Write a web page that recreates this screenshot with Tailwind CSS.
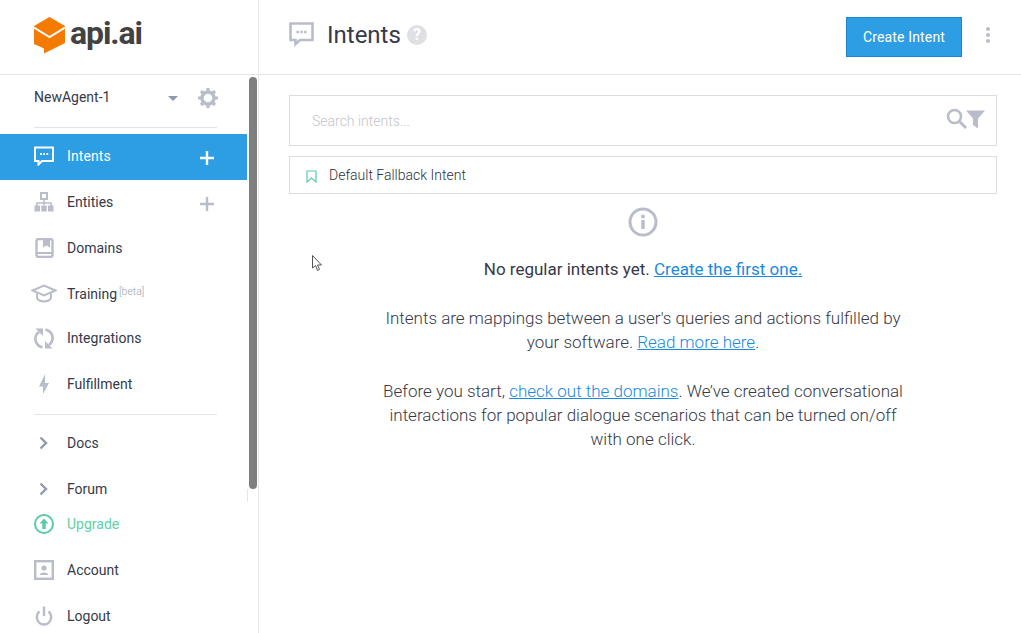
<!DOCTYPE html>
<html lang="en">
<head>
  <meta charset="UTF-8" />
  <title>Intents</title>
  <script src="https://cdn.jsdelivr.net/npm/@tailwindcss/browser@4"></script>
</head>
<body class="bg-white font-['Roboto',sans-serif] text-[#36394a] overflow-hidden">
  <div class="relative flex h-[633px] w-[1021px] overflow-hidden">

    <!-- Sidebar -->
    <aside class="relative w-[259px] shrink-0 border-r border-[#e6e6e6]">
      <div class="flex h-[75px] items-start border-b border-[#e4e4e4] pl-[34px] pt-[17px]">
        <svg width="31" height="37" viewBox="0 0 31 37" class="shrink-0">
          <path d="M15.500 0L31 9V26L10 36.500V31.500L0 27V9Z" fill="#f47a00"/>
          <path d="M0 10.500L15.500 20L31 10.500" fill="none" stroke="#fff" stroke-width="2"/>
        </svg>
        <span class="ml-[5px] mt-[-3px] text-[32px] leading-[38px] font-bold tracking-[-1.1px] text-[#424242]">api.ai</span>
      </div>

      <div class="flex h-[45px] items-center pl-[34px]">
        <span class="text-[14px]">NewAgent-1</span>
        <span class="ml-[58px] mt-[2px] h-0 w-0 border-x-[5px] border-t-[5px] border-x-transparent border-t-[#9299ab]"></span>
        <svg width="20" height="20" viewBox="0 0 20 20" class="ml-[20px]">
          <circle cx="10" cy="10" r="6" fill="none" stroke="#b9bdc9" stroke-width="3.400"/>
          <path d="M10 0v4M10 16v4M0 10h4M16 10h4M3 3l2.800 2.800M14.200 14.200L17 17M17 3l-2.800 2.800M5.800 14.200L3 17" stroke="#b9bdc9" stroke-width="3.200"/>
        </svg>
      </div>

      <div class="ml-[34px] mt-[7px] h-px w-[183px] bg-[#e4e4e4]"></div>

      <nav class="mt-[6px] w-[247px] text-[14px]">
        <div class="flex h-[46px] items-center bg-[#2d9de4] pb-[2px] pl-[34px] text-white">
          <svg width="20" height="20" viewBox="0 0 20 20" class="shrink-0">
            <path d="M1 1.500H19V15H8L4.500 18.500V15H1Z" fill="none" stroke="#fff" stroke-width="2"/>
            <path d="M6 8h1.800M9.200 8H11M12.400 8h1.800" stroke="#fff" stroke-width="2"/>
          </svg>
          <span class="ml-[13px] flex-1 tracking-[0.1px]">Intents</span>
          <svg width="14" height="14" viewBox="0 0 14 14" class="mr-[33px] mt-[3px]"><path d="M7 0v14M0 7h14" stroke="#fff" stroke-width="2.400"/></svg>
        </div>

        <div class="flex h-[46px] items-center pb-[2px] pl-[34px]">
          <svg width="20" height="20" viewBox="0 0 20 20" class="shrink-0">
            <rect x="7" y="1" width="6" height="6" fill="none" stroke="#b9bdc9" stroke-width="2"/>
            <path d="M10 7v6M3 14v-3h14v3" fill="none" stroke="#b9bdc9" stroke-width="1.600"/>
            <path d="M.5 13.500h5.500v6H.5zM7.300 13.500h5.400v6H7.300zM14 13.500h5.500v6H14z" fill="#b9bdc9"/>
          </svg>
          <span class="ml-[13px] flex-1">Entities</span>
          <svg width="14" height="14" viewBox="0 0 14 14" class="mr-[33px] mt-[3px]"><path d="M7 0v14M0 7h14" stroke="#b9bdc9" stroke-width="2.400"/></svg>
        </div>

        <div class="flex h-[46px] items-center pb-[2px] pl-[34px]">
          <svg width="20" height="20" viewBox="0 0 20 20" class="shrink-0">
            <rect x="2.500" y="1" width="16" height="18" rx="2" fill="none" stroke="#b9bdc9" stroke-width="2.400"/>
            <path d="M2.500 15H18" stroke="#b9bdc9" stroke-width="2"/>
            <path d="M9 1H16V9.500L12.500 7.500L9 9.500Z" fill="#b9bdc9"/>
          </svg>
          <span class="ml-[13px]">Domains</span>
        </div>

        <div class="flex h-[46px] items-center pb-[2px] pl-[31px]">
          <svg width="26" height="20" viewBox="0 0 26 20" class="shrink-0">
            <path d="M13 1.500L24.500 6.500L13 11.500L1.500 6.500Z" fill="none" stroke="#b9bdc9" stroke-width="2"/>
            <path d="M6 9.500V14C8 18.500 18 18.500 20 14V9.500" fill="none" stroke="#b9bdc9" stroke-width="2"/>
          </svg>
          <span class="ml-[10px]">Training</span>
          <span class="mb-[4px] ml-[2px] text-[10.500px] font-light text-[#9a9fae]">[beta]</span>
        </div>

        <div class="flex h-[42px] items-center pb-[2px] pl-[34px]">
          <svg width="20" height="21" viewBox="0 0 20 21" class="shrink-0" fill="none" stroke="#b9bdc9" stroke-width="2.600">
            <path d="M8.500 19.500C0 17 -.5 8 5 4"/>
            <path d="M11.500 1.500C20 4 20.500 13 15 17"/>
            <path d="M1.500 .5H9V8Z" fill="#b9bdc9" stroke="none"/>
            <path d="M18.500 20.500H11V13Z" fill="#b9bdc9" stroke="none"/>
          </svg>
          <span class="ml-[13px]">Integrations</span>
        </div>

        <div class="flex h-[50px] items-center pb-[2px] pl-[34px]">
          <svg width="20" height="20" viewBox="0 0 20 20" class="shrink-0">
            <path d="M11 0L5 12.500H9V20L15 9H11Z" fill="#b9bdc9"/>
          </svg>
          <span class="ml-[13px]">Fulfillment</span>
        </div>
      </nav>

      <div class="ml-[34px] mt-[4px] h-px w-[183px] bg-[#e4e4e4]"></div>

      <nav class="mt-[5px] text-[14px]">
        <div class="flex h-[46px] items-center pl-[34px]">
          <svg width="20" height="14" viewBox="0 0 20 14" class="shrink-0"><path d="M6.500 1.500L12 7L6.500 12.500" fill="none" stroke="#9299ab" stroke-width="2.400"/></svg>
          <span class="ml-[13px]">Docs</span>
        </div>
        <div class="flex h-[46px] items-center pl-[34px]">
          <svg width="20" height="14" viewBox="0 0 20 14" class="shrink-0"><path d="M6.500 1.500L12 7L6.500 12.500" fill="none" stroke="#9299ab" stroke-width="2.400"/></svg>
          <span class="ml-[13px]">Forum</span>
        </div>
        <div class="-mt-[11px] flex h-[46px] items-center pl-[34px] text-[#5fd0a9]">
          <svg width="20" height="20" viewBox="0 0 20 20" class="shrink-0">
            <circle cx="10" cy="10" r="9" fill="none" stroke="#5acca5" stroke-width="2"/>
            <path d="M10 4.500L14.500 9.500H11.700V15H8.300V9.500H5.500Z" fill="#5acca5"/>
          </svg>
          <span class="ml-[13px]">Upgrade</span>
        </div>
        <div class="flex h-[46px] items-center pl-[34px]">
          <svg width="20" height="20" viewBox="0 0 20 20" class="shrink-0">
            <rect x="1.200" y="1.200" width="17.600" height="17.600" fill="none" stroke="#b9bdc9" stroke-width="2.400"/>
            <circle cx="10" cy="8" r="2.600" fill="#b9bdc9"/>
            <path d="M5.500 15C5.500 11.500 14.500 11.500 14.500 15Z" fill="#b9bdc9"/>
          </svg>
          <span class="ml-[13px]">Account</span>
        </div>
        <div class="flex h-[46px] items-center pl-[34px]">
          <svg width="20" height="20" viewBox="0 0 20 20" class="shrink-0" fill="none" stroke="#b9bdc9" stroke-width="2.400">
            <path d="M5.500 5.500C1 9 2.500 18.500 10 18.500C17.500 18.500 19 9 14.500 5.500"/>
            <path d="M10 .5V10"/>
          </svg>
          <span class="ml-[13px]">Logout</span>
        </div>
      </nav>

      <!-- scrollbar overlay -->
      <div class="absolute left-[249px] top-[77px] h-[412px] w-[8px] rounded-full bg-[#7f7f7f]"></div>
      <div class="absolute left-[247px] top-[489px] h-[13px] w-px bg-[#e6e6e6]"></div>
    </aside>

    <!-- Main -->
    <main class="flex-1">
      <header class="flex h-[75px] items-start border-b border-[#e4e4e4] pl-[30px]">
        <svg width="25" height="25" viewBox="0 0 25 25" class="mt-[22px] shrink-0">
          <path d="M1.500 1.500H23.500V18H11L6.500 22V18H1.500Z" fill="none" stroke="#b9bdc9" stroke-width="2.600"/>
          <path d="M7.500 10h2.400M11.300 10h2.400M15.100 10h2.400" stroke="#b9bdc9" stroke-width="2.400"/>
        </svg>
        <h1 class="ml-[13px] mt-[18px] text-[24px] leading-[34px]">Intents</h1>
        <span class="ml-[6px] mt-[25px] flex h-[20px] w-[20px] items-center justify-center rounded-full bg-[#dfe0e3] text-[16px] leading-none font-bold text-white">?</span>
        <button class="ml-auto mt-[17px] h-[40px] w-[116px] border border-[#1a87d6] bg-[#2d9de4] text-[14px] tracking-[0.15px] text-white">Create Intent</button>
        <span class="ml-[24px] mr-[31px] mt-[27px] flex w-[4px] flex-col gap-[2px]">
          <i class="h-[4px] w-[4px] rounded-full bg-[#b9bdc9]"></i>
          <i class="h-[4px] w-[4px] rounded-full bg-[#b9bdc9]"></i>
          <i class="h-[4px] w-[4px] rounded-full bg-[#b9bdc9]"></i>
        </span>
      </header>

      <div class="ml-[30px] mr-[24px] mt-[20px]">
        <div class="flex h-[51px] items-center border border-[#dcdcdc] pl-[22px] pr-[10px] pt-[2px]">
          <span class="flex-1 text-[14px] font-light text-[#c3c4ca]">Search intents...</span>
          <svg width="40" height="22" viewBox="0 0 40 22" class="mb-[5px]">
            <circle cx="8.500" cy="8.500" r="6.500" fill="none" stroke="#b9bdc9" stroke-width="2.600"/>
            <path d="M13 13L20 20" stroke="#b9bdc9" stroke-width="3"/>
            <path d="M20 2.500H39L32 10.500V20.500L27 17V10.500Z" fill="#b9bdc9"/>
          </svg>
        </div>
        <div class="mt-[10px] flex h-[38px] items-center border border-[#dcdcdc] pl-[16px]">
          <svg width="11" height="13" viewBox="0 0 11 13" class="mt-[3px] shrink-0"><path d="M1 1H10V12L5.500 8L1 12Z" fill="none" stroke="#5acca5" stroke-width="1.200"/></svg>
          <span class="ml-[12px] text-[14px] font-light text-[#2c2f3c]">Default Fallback Intent</span>
        </div>

        <div class="flex flex-col items-center text-center">
          <svg width="30" height="30" viewBox="0 0 30 30" class="mt-[13px]">
            <circle cx="15" cy="15" r="13" fill="none" stroke="#b9bdc9" stroke-width="3"/>
            <rect x="13.300" y="13" width="3.400" height="9" fill="#b9bdc9"/>
            <circle cx="15" cy="9.500" r="2" fill="#b9bdc9"/>
          </svg>
          <p class="mt-[20px] text-[17px] leading-[24px]">No regular intents yet. <a class="text-[#1a8ae0] underline">Create the first one.</a></p>
          <p class="mt-[25px] w-[530px] text-[17px] leading-[24px] font-light">Intents are mappings between a user's queries and actions fulfilled by your software. <a class="text-[#1a8ae0] underline">Read more here</a>.</p>
          <p class="mt-[25px] w-[530px] text-[17px] leading-[24px] font-light">Before you start, <a class="text-[#1a8ae0] underline">check out the domains</a>. We’ve created conversational interactions for popular dialogue scenarios that can be turned on/off with one click.</p>
        </div>
      </div>
    </main>

    <!-- mouse pointer -->
    <svg width="12" height="18" viewBox="0 0 12 18" class="absolute left-[312px] top-[255px]">
      <path d="M.5 .5V13L3.500 10.500L5.500 15.500L7.500 14.500L5.500 10H9.500Z" fill="#fff" stroke="#555" stroke-width="1"/>
    </svg>
  </div>
</body>
</html>
